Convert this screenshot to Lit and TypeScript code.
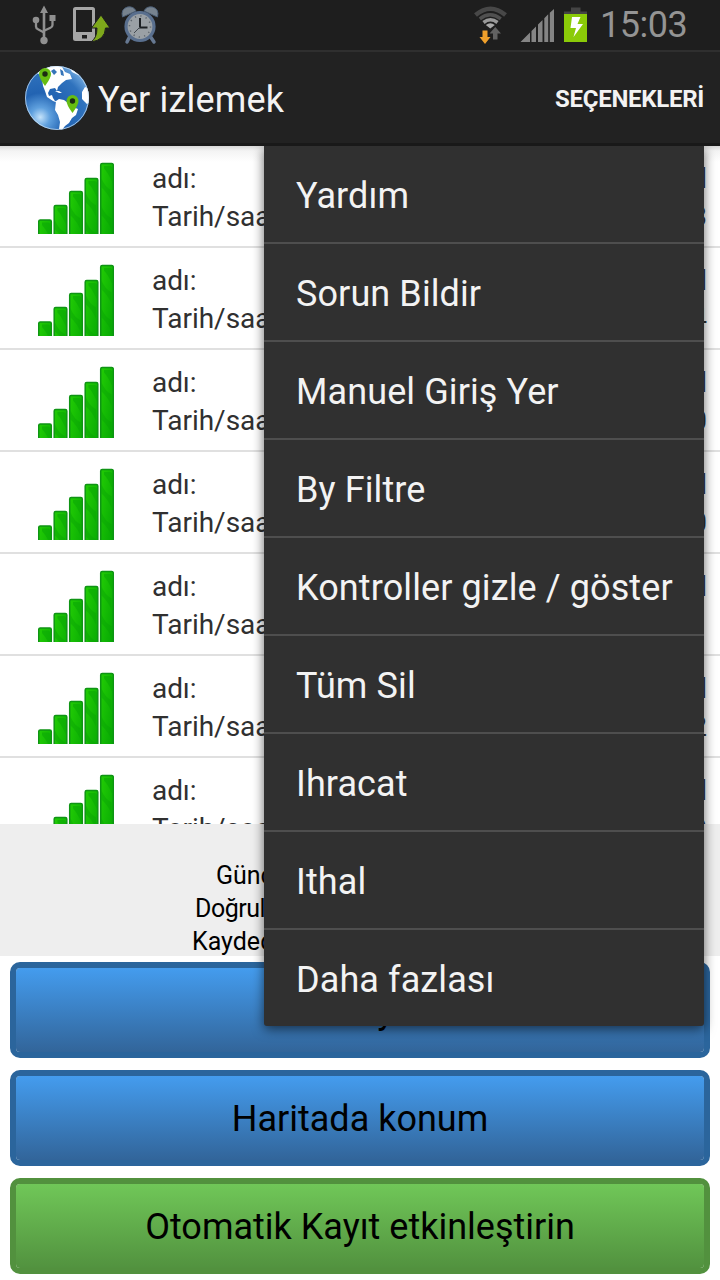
import { LitElement, html, css, svg } from "lit";
import { customElement, property } from "lit/decorators.js";

interface Entry {
  name: string;
  time: string;
}

const entries: Entry[] = [
  { name: "l", time: "3" },
  { name: "l", time: "4" },
  { name: "l", time: "0" },
  { name: "l", time: "0" },
  { name: "l", time: "" },
  { name: "l", time: "2" },
  { name: "l", time: "9" },
];

const menuItems = [
  "Yardım",
  "Sorun Bildir",
  "Manuel Giriş Yer",
  "By Filtre",
  "Kontroller gizle / göster",
  "Tüm Sil",
  "Ihracat",
  "Ithal",
  "Daha fazlası",
];

@customElement("status-bar")
export class StatusBar extends LitElement {
  static styles = css`
    :host {
      display: flex;
      align-items: center;
      height: 50px;
      box-sizing: border-box;
      background: #1e1e1e;
      color: #949494;
    }
    svg { display: block; flex: none; }
    .usb { margin-left: 32px; }
    .phone { margin-left: 16px; }
    .alarm { margin-left: 11px; }
    .wifi { margin-left: auto; }
    .signal { margin-left: 13px; }
    .battery { margin-left: 10px; }
    .clock {
      width: 120px;
      margin-left: 12px;
      font-size: 36px;
      line-height: 50px;
      letter-spacing: -0.5px;
      white-space: nowrap;
    }
  `;

  render() {
    return html`
      <svg class="usb" width="24" height="50" viewBox="32 0 24 50">
        <g fill="#909090">
          <path d="M44 5.500l4 7.500h-8z" />
          <path d="M42.700 11h2.600v29h-2.600z" />
          <circle cx="44" cy="40.500" r="3.700" />
          <circle cx="36" cy="20" r="3.300" />
          <path d="M49.500 15h6v6h-6z" />
        </g>
        <path d="M36 20v6.500q0 2 2 2.800l6 3.200M52.500 20v5q0 2-2 2.800l-6.500 3" fill="none" stroke="#909090" stroke-width="2.300" />
      </svg>
      <svg class="phone" width="38" height="50" viewBox="72 0 38 50">
        <path fill="#a6a6a6" fill-rule="evenodd" d="M75.500 7h17q2.500 0 2.500 2.500v29q0 2.500-2.500 2.500h-17q-2.500 0-2.500-2.500v-29q0-2.500 2.500-2.500zM76 10v22h16V10zM82 35v3.500h5V35z" />
        <path fill="#7ea81b" stroke="#1e1e1e" stroke-width="1" d="M101 15l9 13h-4.500q-.5 12-14.500 14q6-4 6-14h-5.500z" />
      </svg>
      <svg class="alarm" width="38" height="50" viewBox="121 0 38 50">
        <path d="M130 36l-3 6M150 36l4 6" stroke="#667891" stroke-width="3.500" stroke-linecap="round" />
        <path d="M122.500 17q-2-8 5-10q6-1 8.500 4zM157.500 17q2-8-5-10q-6-1-8.500 4z" fill="#77838f" stroke="#4d6078" />
        <circle cx="140" cy="26.500" r="14" fill="#9aa0a5" stroke="#596f8e" stroke-width="3.200" />
        <circle cx="140" cy="26.500" r="10.500" fill="none" stroke="#5d646c" stroke-width="1.500" stroke-dasharray="1.200 4.300" />
        <path d="M140 18v9.500h7.500" fill="none" stroke="#1c2024" stroke-width="2" />
        <path d="M140 27l-6 6" stroke="#444b52" stroke-width="1" />
      </svg>
      <svg class="wifi" width="34" height="50" viewBox="473 0 34 50">
        <g fill="none">
          <path d="M475.500 15q15-12.500 30 0" stroke="#484848" stroke-width="4.500" />
          <path d="M479.800 18.800q10.200-8 21 0" stroke="#505050" stroke-width="3.500" />
          <path d="M483.500 22.500q7-5.500 14 0" stroke="#999" stroke-width="3.500" />
        </g>
        <path d="M485.800 25q4.500-3.500 9 0l-4.500 3.500z" fill="#aaa" />
        <path d="M482.500 30.500h5V37h3l-5.500 7-5.500-7h3z" fill="#f0a02b" />
        <path d="M493 39.500h4.500v-6h3.500l-5.700-6.500-5.800 6.500h3.500z" fill="#626262" />
      </svg>
      <svg class="signal" width="34" height="50" viewBox="520 0 34 50">
        <path fill="#858585" d="M520.500 42l9.500-9.500V42zM531.500 31l4.500-4.500V42h-4.500zM538 24.500l4.500-4.500v22H538zM544.300 18.200l3.900-3.900V42h-3.900zM549.800 12.700l4.200-3.700v33h-4.200z" />
      </svg>
      <svg class="battery" width="24" height="50" viewBox="564 0 24 50">
        <path d="M571 7.500h9.500v4h6.500V16h-23v-4.500h7z" fill="#444" />
        <path d="M564 14h23v28h-23z" fill="#8bcb08" />
        <path d="M572 17h8.500l-3 7h5.500L573.500 37l2.500-9h-5.500z" fill="#fff" />
      </svg>
      <span class="clock">15:03</span>
    `;
  }
}

@customElement("signal-row")
export class SignalRow extends LitElement {
  @property() name = "";
  @property() time = "";

  static styles = css`
    :host {
      display: flex;
      flex: none;
      height: 102px;
      box-sizing: border-box;
      border-bottom: 2px solid #e0e0e0;
      padding: 14px 13px 0 38px;
      color: #303030;
      font-size: 28px;
      line-height: 38px;
    }
    .bars { flex: none; margin-top: 2px; width: 76px; height: 72px; }
    .text { flex: 1; margin-left: 38px; }
    .line { display: flex; justify-content: space-between; height: 38px; }
    .name { letter-spacing: -0.1px; }
  `;

  render() {
    const tops = [58, 43.5, 29.5, 16.5, 1.5];
    return html`
      <svg class="bars" viewBox="0 0 76 72">
        <defs>
          <linearGradient id="g" x1="0" y1="0" x2="1" y2="1">
            <stop offset="0" stop-color="#22cc04" />
            <stop offset="1" stop-color="#04a504" />
          </linearGradient>
          <clipPath id="c"><path d="M0 0h76v72H0z" /></clipPath>
        </defs>
        <g clip-path="url(#c)">
          ${tops.map((t, i) => {
            const x = i * 15.5;
            return svg`
              <rect x=${x + 0.7} y=${t} width="12.600" height="80" rx="1.500" fill="url(#g)" stroke="#0f9414" stroke-width="1.500" />
              <path d="M${x + 4} ${t + 5}q4 4 8.500 14v-15l-2-1.500h-6.500z" fill="#0aa805" opacity=".6" />
              <path d="M${x + 1.5} ${t + 24}q6 5 10 14v-11q-7-4-10-12z" fill="#08a005" opacity=".4" />
              <path d="M${x + 1.5} ${t + 52}q6 5 10 14v-11q-7-4-10-12z" fill="#08a005" opacity=".4" />
            `;
          })}
        </g>
      </svg>
      <div class="text">
        <div class="line"><span class="name">adı:</span><span>${this.name}</span></div>
        <div class="line"><span>Tarih/saat:</span><span>${this.time}</span></div>
      </div>
    `;
  }
}

@customElement("app-root")
export class AppRoot extends LitElement {
  static styles = css`
    :host {
      display: flex;
      flex-direction: column;
      position: relative;
      width: 720px;
      height: 1280px;
      overflow: hidden;
      background: #fff;
      font-family: Roboto, "Liberation Sans", sans-serif;
    }
    .bar {
      display: flex;
      align-items: center;
      flex: none;
      height: 96px;
      box-sizing: border-box;
      padding: 0 16px 0 24px;
      background: #222;
      border-top: 2px solid #2f2f2f;
      border-bottom: 3px solid #191919;
      color: #f3f3f3;
    }
    .globe { flex: none; display: block; margin-top: 1px; }
    .title {
      margin: 4px 0 0 8px;
      font-size: 36px;
      font-weight: 400;
      letter-spacing: 0.2px;
      white-space: nowrap;
    }
    .options {
      margin: 2px 0 0 auto;
      font-size: 24px;
      font-weight: 700;
      letter-spacing: -0.28px;
    }
    .list {
      display: flex;
      flex-direction: column;
      flex: none;
      height: 678px;
      overflow: hidden;
      background: linear-gradient(#d8d8d8, #f4f4f4 5px, #fff 16px);
    }
    .info {
      flex: none;
      height: 132px;
      box-sizing: border-box;
      padding-top: 35px;
      background: #eee;
      color: #000;
      font-size: 25px;
      line-height: 33px;
    }
    .info div { height: 33px; }
    .updated { padding-left: 216px; }
    .accuracy { padding-left: 195px; letter-spacing: -0.5px; }
    .saved { padding-left: 192px; }
    .buttons {
      display: flex;
      flex-direction: column;
      gap: 12px;
      padding: 6px 10px;
    }
    .button {
      height: 96px;
      box-sizing: border-box;
      border: 6px solid #2b659c;
      border-radius: 10px;
      background: linear-gradient(#449cee, #32659a) padding-box;
      font: 400 36px/82px Roboto, "Liberation Sans", sans-serif;
      color: #000;
      text-align: center;
      padding: 2px 0 0;
      white-space: nowrap;
    }
    .green {
      border-color: #52913e;
      background: linear-gradient(#70c758, #52923f) padding-box;
    }
    .menu {
      position: absolute;
      left: 264px;
      top: 146px;
      width: 440px;
      height: 880px;
      background: #303030;
      border-radius: 0 0 3px 3px;
      box-shadow: 0 3px 12px rgba(0, 0, 0, 0.6);
      clip-path: inset(0 -30px -30px -30px);
    }
    .item {
      height: 96px;
      padding-left: 32px;
      font-size: 36px;
      line-height: 100px;
      letter-spacing: 0.1px;
      color: #f3f3f3;
      white-space: nowrap;
    }
    .item + .item { border-top: 2px solid #4e4e4e; }
  `;

  render() {
    return html`
      <status-bar></status-bar>
      <header class="bar">
        <svg class="globe" width="66" height="66" viewBox="24 65 66 66">
          <defs>
            <radialGradient id="sea" cx=".24" cy=".8" r=".95">
              <stop offset="0" stop-color="#c4e2fa" />
              <stop offset=".16" stop-color="#5fa0de" />
              <stop offset=".4" stop-color="#2263b2" />
              <stop offset=".75" stop-color="#2f72bd" />
              <stop offset="1" stop-color="#7db4e6" />
            </radialGradient>
            <clipPath id="disc"><circle cx="57" cy="98" r="32" /></clipPath>
          </defs>
          <circle cx="57" cy="98" r="32" fill="url(#sea)" />
          <g clip-path="url(#disc)">
            <path fill="#fff" d="M37 72l7-6 10-1 8 2 3 5 5 2 2 5-6 1-4 3-4 4-1 4-2-3-5 1-2 4 1 3 3-1 1 3 2 3 4 1-1 1-5-2-6-4-2-6-2-5-1-8z" />
            <path fill="#fff" d="M56 101l3-2 5 1 4 3 5 4 5 2-2 6-4 3-3 5-4 3-3 4-3-1 1-7-2-7-3-5z" />
            <path fill="#fff" d="M82 92l3-5 5 2v13l-3 2-5-5zM69 67l6 2 6 5-3 1-6-3z" />
            <path fill="#3574b8" d="M51 71l3-2 3 3-3 3zM60 69l3 2 1 5-3-1z" />
            <path fill="#fff" d="M55 91l4 0 3 2-3 0z" />
          </g>
          <circle cx="57" cy="98" r="31.500" fill="none" stroke="#d4e7f6" stroke-width="1" opacity=".7" />
          <g fill="#66bd12">
            <path d="M45 86q-6-8-6-12a6 6 0 0 1 12 0q0 4-6 12z" />
            <path d="M72.500 113q-6-8-6-12a6 6 0 0 1 12 0q0 4-6 12z" />
          </g>
          <g fill="#1c2b12">
            <circle cx="45" cy="74" r="2.700" />
            <circle cx="72.500" cy="101" r="2.700" />
          </g>
        </svg>
        <h1 class="title">Yer izlemek</h1>
        <span class="options">SEÇENEKLERİ</span>
      </header>
      <main class="list">
        ${entries.map((e) => html`<signal-row .name=${e.name} .time=${e.time}></signal-row>`)}
      </main>
      <section class="info">
        <div class="updated">Günc</div>
        <div class="accuracy">Doğrul</div>
        <div class="saved">Kayded</div>
      </section>
      <div class="buttons">
        <button class="button">Yer Kaydet</button>
        <button class="button">Haritada konum</button>
        <button class="button green">Otomatik Kayıt etkinleştirin</button>
      </div>
      <nav class="menu">
        ${menuItems.map((m) => html`<div class="item">${m}</div>`)}
      </nav>
    `;
  }
}
